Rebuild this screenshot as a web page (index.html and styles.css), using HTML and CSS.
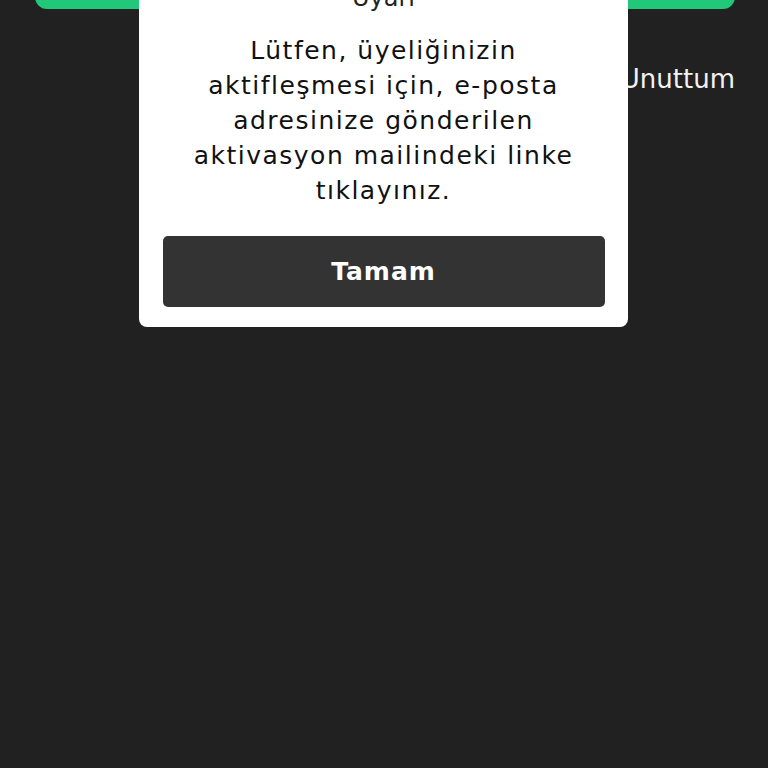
FILE: index.html
```html
<!DOCTYPE html>
<html lang="tr">
<head>
    <meta charset="UTF-8">
    <meta name="viewport" content="width=device-width, initial-scale=1.0">
    <title>Giriş</title>
    <link rel="stylesheet" href="styles.css">
</head>
<body>
    <div class="page">
        <button class="btn-giris">Giriş Yap</button>
        <div class="sifre-row">
            <a class="sifre-link" href="#">Şifremi Unuttum</a>
        </div>
    </div>

    <div class="modal">
        <div class="modal-title">Uyarı</div>
        <p class="modal-text">Lütfen, üyeliğinizin aktifleşmesi için, e-posta adresinize gönderilen aktivasyon mailindeki linke tıklayınız.</p>
        <button class="modal-btn">Tamam</button>
    </div>
</body>
</html>
```

FILE: styles.css
```css
body {
    margin: 0;
    padding: 0;
    background-color: #212121;
    font-family: "DejaVu Sans", "Noto Sans", sans-serif;
    height: 768px;
    overflow: hidden;
}
.page {
    padding: 0 33px 0 35px;
}
.btn-giris {
    display: block;
    width: 100%;
    height: 56px;
    margin-top: -47px;
    background-color: #21c87a;
    color: #fff;
    border: none;
    border-radius: 12px;
    font-family: inherit;
    font-size: 24px;
}
.sifre-row {
    display: flex;
    justify-content: flex-end;
    margin-top: 52px;
}
.sifre-link {
    color: #f2f2f2;
    text-decoration: none;
    font-size: 26px;
    line-height: 36px;
}
.modal {
    position: absolute;
    top: -17px;
    left: 139px;
    width: 489px;
    box-sizing: border-box;
    padding: 0 18px 20px 18px;
    background-color: #fff;
    border-radius: 8px;
    text-align: center;
    color: #111;
}
.modal-title {
    font-size: 24px;
    line-height: 30px;
    color: #222;
}
.modal-text {
    margin: 20px 24px 28px;
    font-size: 25px;
    line-height: 35px;
    letter-spacing: 1.5px;
}
.modal-btn {
    display: block;
    width: 442px;
    margin: 0 auto;
    height: 71px;
    background-color: #333333;
    color: #fff;
    border: none;
    border-radius: 5px;
    font-family: inherit;
    font-size: 25px;
    font-weight: bold;
    letter-spacing: 1px;
}
```
